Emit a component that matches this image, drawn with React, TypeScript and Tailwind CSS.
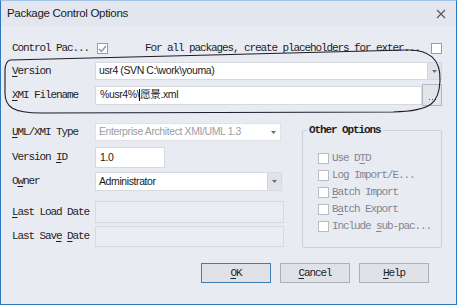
import React from 'react';

const mono = "font-['Liberation_Mono',monospace] text-[11px] tracking-[-1.1px]";
const sans = "font-['Liberation_Sans','Noto_Sans_CJK_SC',sans-serif] text-[10.5px] tracking-[-0.4px]";

function U({ children }: { children: React.ReactNode }) {
  return <span className="underline underline-offset-2">{children}</span>;
}

function Arrow({ box }: { box?: boolean }) {
  return (
    <div className={`w-[14px] self-stretch flex items-center justify-center ${box ? 'bg-[#e2e3e8] border-l border-[#d4d6dc]' : ''}`}>
      <svg width="5" height="3" viewBox="0 0 5 3"><path d="M0 0h5L2.5 3z" fill="#6a6d75" /></svg>
    </div>
  );
}

function Check({ checked, disabled }: { checked?: boolean; disabled?: boolean }) {
  return (
    <div className={`w-[11px] h-[11px] shrink-0 border ${disabled ? 'border-[#b9bcc4]' : 'border-[#9a9da6]'} bg-white flex items-center justify-center`}>
      {checked && (
        <svg width="9" height="8" viewBox="0 0 9 8"><path d="M1 4l2.5 2.5L8 1" stroke="#8a8d96" strokeWidth="1.2" fill="none" /></svg>
      )}
    </div>
  );
}

function Row({ label, children, h, mt }: { label: React.ReactNode; children: React.ReactNode; h: string; mt: string }) {
  return (
    <div className={`flex items-center ${h} ${mt}`}>
      <div className={`w-[83px] shrink-0 ${mono} text-[#1e1e1e]`}>{label}</div>
      {children}
    </div>
  );
}

export default function App() {
  const options: React.ReactNode[] = [
    <>Use D<U>T</U>D</>,
    <>Log Import/E...</>,
    <><U>B</U>atch Import</>,
    <>B<U>a</U>tch Export</>,
    <>Include <U>s</U>ub-pac...</>,
  ];

  return (
    <div className="w-[457px] h-[305px] bg-[#e9ebf3] border border-[#2f78bd] border-t-[#9fc3e6] flex flex-col relative overflow-hidden">
      {/* Title bar */}
      <div className="h-[25px] bg-[#e3e6ee] flex items-center justify-between pl-[6px] pr-[10px]">
        <span className="font-['Liberation_Sans',sans-serif] text-[11.5px] tracking-[-0.3px] text-[#1a1a1a]">Package Control Options</span>
        <svg width="10" height="10" viewBox="0 0 10 10"><path d="M1 1l8 8M9 1l-8 8" stroke="#555" strokeWidth="1.1" /></svg>
      </div>

      <div className="flex flex-col pl-[11px] pr-[14px]">
        {/* Row 1 */}
        <div className={`flex items-center h-[15px] mt-[15px] ${mono} text-[#1e1e1e]`}>
          <span className="w-[85px]">Control Pac...</span>
          <Check checked />
          <span className="ml-[37px] flex-1">For all packages, create placeholders for exter...</span>
          <Check />
        </div>

        <Row label={<><U>V</U>ersion</>} h="h-[18px]" mt="mt-[6px]">
          <div className={`flex-1 h-full bg-white border border-[#d7d9df] flex items-center pl-[3px] ${sans} text-[#1a1a1a]`}>
            <span className="flex-1">usr4 (SVN C:\work\youma)</span>
            <Arrow box />
          </div>
        </Row>

        <Row label={<><U>X</U>MI Filename</>} h="h-[22px]" mt="mt-[4px]">
          <div className={`flex-1 h-[19px] bg-white border border-[#d7d9df] flex items-center pl-[4px] ${sans} text-[#1a1a1a]`}>
            %usr4%\<span className="w-px h-[12px] bg-black" />愿景.xml
          </div>
          <div className="w-[20px] shrink-0 h-full border border-[#b4b7bf] bg-[#e4e5ea] flex items-end justify-center gap-[2px] pb-[5px]">
            <span className="w-[1px] h-[1px] bg-[#555]" />
            <span className="w-[1px] h-[1px] bg-[#555]" />
            <span className="w-[1px] h-[1px] bg-[#555]" />
          </div>
        </Row>

        {/* Lower section */}
        <div className="flex mt-[17px]">
          <div className="flex flex-col w-[272px]">
            <Row label={<><U>U</U>ML/XMI Type</>} h="h-[18px]" mt="mt-0">
              <div className={`w-[186px] h-full bg-white border border-[#e0e2e7] flex items-center pl-[3px] ${sans} text-[#9b9ea6]`}>
                <span className="flex-1">Enterprise Architect XMI/UML 1.3</span>
                <Arrow />
              </div>
            </Row>
            <Row label={<>Version <U>I</U>D</>} h="h-[21px]" mt="mt-[6px]">
              <div className={`w-[70px] h-full bg-white border border-[#d7d9df] flex items-center pl-[4px] ${sans} text-[#1a1a1a]`}>1.0</div>
            </Row>
            <Row label={<>O<U>w</U>ner</>} h="h-[19px]" mt="mt-[4px]">
              <div className={`w-[187px] h-full bg-white border border-[#d7d9df] flex items-center pl-[3px] ${sans} text-[#1a1a1a]`}>
                <span className="flex-1">Administrator</span>
                <Arrow box />
              </div>
            </Row>
            <Row label={<><U>L</U>ast Load Date</>} h="h-[22px]" mt="mt-[10px]">
              <div className="w-[189px] h-full border border-[#d7d9df] bg-[#ecedf3]" />
            </Row>
            <Row label={<>Last Sav<U>e</U> <U>D</U>ate</>} h="h-[21px]" mt="mt-[3px]">
              <div className="w-[189px] h-full border border-[#d7d9df] bg-[#ecedf3]" />
            </Row>
          </div>

          <fieldset className="ml-[18px] -mt-[1px] w-[142px] h-[126px] border border-[#cdd0d8] rounded-[2px] pl-0">
            <legend className={`ml-[4px] px-[2px] ${mono} font-bold text-[#1e1e1e]`}>Other Options</legend>
            <div className="flex flex-col gap-[6px] pl-[15px] pt-[14px]">
              {options.map((o, i) => (
                <div key={i} className={`flex items-center gap-[3px] h-[11px] ${mono} text-[#83868f]`}>
                  <Check disabled />
                  <span>{o}</span>
                </div>
              ))}
            </div>
          </fieldset>
        </div>

        {/* Buttons */}
        <div className={`flex justify-end gap-[9px] mt-[15px] pr-[13px] ${mono} text-[#1e1e1e]`}>
          <button className="w-[70px] h-[20px] bg-[#e1e2e7] border border-[#3c7fb6]"><U>O</U>K</button>
          <button className="w-[70px] h-[20px] bg-[#e1e2e7] border border-[#adb0b7]"><U>C</U>ancel</button>
          <button className="w-[70px] h-[20px] bg-[#e1e2e7] border border-[#adb0b7]"><U>H</U>elp</button>
        </div>
      </div>

      {/* hand-drawn annotation */}
      <svg className="absolute left-0 top-0 pointer-events-none" width="457" height="305">
        <path
          d="M9 59 C 120 56, 300 52, 405 49 C 428 48, 440 58, 439 80 C 438 101, 432 110, 392 111 L 40 112 C 12 112, 4 106, 4 92 L 4 70 C 4 62, 6 60, 9 59 Z"
          fill="none" stroke="#1d1d24" strokeWidth="1.1"
        />
      </svg>
    </div>
  );
}
